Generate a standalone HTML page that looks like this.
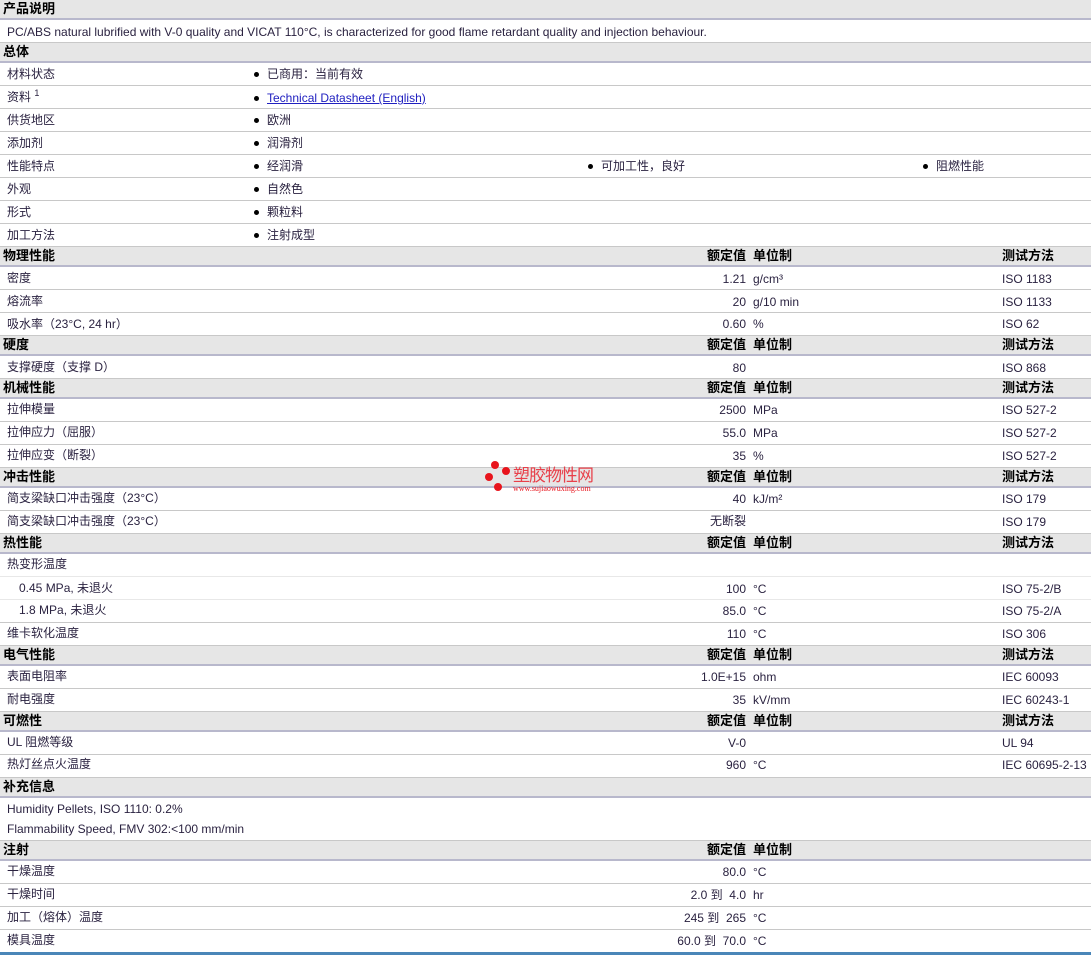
<!DOCTYPE html>
<html><head><meta charset="utf-8"><style>
*{margin:0;padding:0;box-sizing:border-box}
body{width:1091px;height:955px;background:#fff;position:relative;overflow:hidden;font-family:"Liberation Sans","Noto Sans CJK SC",sans-serif;font-size:12px;color:#2a2240}
.r{position:absolute;left:0;width:1091px;border-bottom:1px solid #c8c8c8}
.h{background:#e6e6e6;border-bottom:2px solid #b8b8cc;font-weight:bold;color:#000;font-size:13px}
.t{position:absolute;white-space:nowrap;line-height:14px}
.v{position:absolute;right:345px;white-space:nowrap;line-height:14px;text-align:right}
.u{position:absolute;left:753px;white-space:nowrap;line-height:14px}
.m{position:absolute;left:1002px;white-space:nowrap;line-height:14px}
.b{position:absolute;white-space:nowrap;line-height:14px}
.b:before{content:"";position:absolute;left:-13px;top:5px;width:5px;height:5px;border-radius:50%;background:#000}
a{color:#2020c0;text-decoration:underline}
</style></head><body>
<div class="r h" style="top:0;height:20px"><span class="t" style="left:3px;top:2px">产品说明</span></div>
<div class="r" style="top:20px;height:23px"><span class="t" style="left:7px;top:5px">PC/ABS natural lubrified with V-0 quality and VICAT 110°C, is characterized for good flame retardant quality and injection behaviour.</span></div>
<div class="r h" style="top:43px;height:20px"><span class="t" style="left:3px;top:2px">总体</span></div>
<div class="r" style="top:63px;height:23px"><span class="t" style="left:7px;top:4px">材料状态</span><span class="b" style="left:267px;top:4px">已商用：当前有效</span></div>
<div class="r" style="top:86px;height:23px"><span class="t" style="left:7px;top:4px">资料 <span style="font-size:9px;position:relative;top:-5px">1</span></span><span class="b" style="left:267px;top:5px"><a>Technical Datasheet (English)</a></span></div>
<div class="r" style="top:109px;height:23px"><span class="t" style="left:7px;top:4px">供货地区</span><span class="b" style="left:267px;top:4px">欧洲</span></div>
<div class="r" style="top:132px;height:23px"><span class="t" style="left:7px;top:4px">添加剂</span><span class="b" style="left:267px;top:4px">润滑剂</span></div>
<div class="r" style="top:155px;height:23px"><span class="t" style="left:7px;top:4px">性能特点</span><span class="b" style="left:267px;top:4px">经润滑</span><span class="b" style="left:601px;top:4px">可加工性，良好</span><span class="b" style="left:936px;top:4px">阻燃性能</span></div>
<div class="r" style="top:178px;height:23px"><span class="t" style="left:7px;top:4px">外观</span><span class="b" style="left:267px;top:4px">自然色</span></div>
<div class="r" style="top:201px;height:23px"><span class="t" style="left:7px;top:4px">形式</span><span class="b" style="left:267px;top:4px">颗粒料</span></div>
<div class="r" style="top:224px;height:23px"><span class="t" style="left:7px;top:4px">加工方法</span><span class="b" style="left:267px;top:4px">注射成型</span></div>

<div class="r h" style="top:247px;height:20px"><span class="t" style="left:3px;top:2px">物理性能</span><span class="v" style="top:2px">额定值</span><span class="u" style="top:2px">单位制</span><span class="m" style="top:2px">测试方法</span></div>
<div class="r" style="top:267px;height:23px"><span class="t" style="left:7px;top:4px">密度</span><span class="v" style="top:5px">1.21</span><span class="u" style="top:5px">g/cm³</span><span class="m" style="top:5px">ISO 1183</span></div>
<div class="r" style="top:290px;height:23px"><span class="t" style="left:7px;top:4px">熔流率</span><span class="v" style="top:5px">20</span><span class="u" style="top:5px">g/10 min</span><span class="m" style="top:5px">ISO 1133</span></div>
<div class="r" style="top:313px;height:23px"><span class="t" style="left:7px;top:4px">吸水率（23°C, 24 hr）</span><span class="v" style="top:4px">0.60</span><span class="u" style="top:4px">%</span><span class="m" style="top:4px">ISO 62</span></div>

<div class="r h" style="top:336px;height:20px"><span class="t" style="left:3px;top:2px">硬度</span><span class="v" style="top:2px">额定值</span><span class="u" style="top:2px">单位制</span><span class="m" style="top:2px">测试方法</span></div>
<div class="r" style="top:356px;height:23px"><span class="t" style="left:7px;top:4px">支撑硬度（支撑 D）</span><span class="v" style="top:5px">80</span><span class="m" style="top:5px">ISO 868</span></div>

<div class="r h" style="top:379px;height:20px"><span class="t" style="left:3px;top:2px">机械性能</span><span class="v" style="top:2px">额定值</span><span class="u" style="top:2px">单位制</span><span class="m" style="top:2px">测试方法</span></div>
<div class="r" style="top:399px;height:23px"><span class="t" style="left:7px;top:3px">拉伸模量</span><span class="v" style="top:4px">2500</span><span class="u" style="top:4px">MPa</span><span class="m" style="top:4px">ISO 527-2</span></div>
<div class="r" style="top:422px;height:23px"><span class="t" style="left:7px;top:3px">拉伸应力（屈服）</span><span class="v" style="top:4px">55.0</span><span class="u" style="top:4px">MPa</span><span class="m" style="top:4px">ISO 527-2</span></div>
<div class="r" style="top:445px;height:23px"><span class="t" style="left:7px;top:3px">拉伸应变（断裂）</span><span class="v" style="top:4px">35</span><span class="u" style="top:4px">%</span><span class="m" style="top:4px">ISO 527-2</span></div>

<div class="r h" style="top:468px;height:20px"><span class="t" style="left:3px;top:2px">冲击性能</span><span class="v" style="top:2px">额定值</span><span class="u" style="top:2px">单位制</span><span class="m" style="top:2px">测试方法</span></div>
<div class="r" style="top:488px;height:23px"><span class="t" style="left:7px;top:3px">简支梁缺口冲击强度（23°C）</span><span class="v" style="top:4px">40</span><span class="u" style="top:4px">kJ/m²</span><span class="m" style="top:4px">ISO 179</span></div>
<div class="r" style="top:511px;height:23px"><span class="t" style="left:7px;top:3px">简支梁缺口冲击强度（23°C）</span><span class="v" style="top:3px">无断裂</span><span class="m" style="top:4px">ISO 179</span></div>

<div class="r h" style="top:534px;height:20px"><span class="t" style="left:3px;top:2px">热性能</span><span class="v" style="top:2px">额定值</span><span class="u" style="top:2px">单位制</span><span class="m" style="top:2px">测试方法</span></div>
<div class="r" style="top:554px;height:23px;border-bottom-color:#e8e8e8"><span class="t" style="left:7px;top:3px">热变形温度</span></div>
<div class="r" style="top:577px;height:23px;border-bottom-color:#e8e8e8"><span class="t" style="left:19px;top:4px">0.45 MPa, 未退火</span><span class="v" style="top:5px">100</span><span class="u" style="top:5px">°C</span><span class="m" style="top:5px">ISO 75-2/B</span></div>
<div class="r" style="top:600px;height:23px"><span class="t" style="left:19px;top:3px">1.8 MPa, 未退火</span><span class="v" style="top:4px">85.0</span><span class="u" style="top:4px">°C</span><span class="m" style="top:4px">ISO 75-2/A</span></div>
<div class="r" style="top:623px;height:23px"><span class="t" style="left:7px;top:3px">维卡软化温度</span><span class="v" style="top:4px">110</span><span class="u" style="top:4px">°C</span><span class="m" style="top:4px">ISO 306</span></div>

<div class="r h" style="top:646px;height:20px"><span class="t" style="left:3px;top:2px">电气性能</span><span class="v" style="top:2px">额定值</span><span class="u" style="top:2px">单位制</span><span class="m" style="top:2px">测试方法</span></div>
<div class="r" style="top:666px;height:23px"><span class="t" style="left:7px;top:3px">表面电阻率</span><span class="v" style="top:4px">1.0E+15</span><span class="u" style="top:4px">ohm</span><span class="m" style="top:4px">IEC 60093</span></div>
<div class="r" style="top:689px;height:23px"><span class="t" style="left:7px;top:3px">耐电强度</span><span class="v" style="top:4px">35</span><span class="u" style="top:4px">kV/mm</span><span class="m" style="top:4px">IEC 60243-1</span></div>

<div class="r h" style="top:712px;height:20px"><span class="t" style="left:3px;top:2px">可燃性</span><span class="v" style="top:2px">额定值</span><span class="u" style="top:2px">单位制</span><span class="m" style="top:2px">测试方法</span></div>
<div class="r" style="top:732px;height:23px"><span class="t" style="left:7px;top:3px">UL 阻燃等级</span><span class="v" style="top:4px">V-0</span><span class="m" style="top:4px">UL 94</span></div>
<div class="r" style="top:755px;height:23px"><span class="t" style="left:7px;top:2px">热灯丝点火温度</span><span class="v" style="top:3px">960</span><span class="u" style="top:3px">°C</span><span class="m" style="top:3px">IEC 60695-2-13</span></div>

<div class="r h" style="top:778px;height:20px"><span class="t" style="left:3px;top:2px">补充信息</span></div>
<div class="r" style="top:798px;height:21px;border-bottom:none"><span class="t" style="left:7px;top:4px">Humidity Pellets, ISO 1110: 0.2%</span></div>
<div class="r" style="top:819px;height:22px"><span class="t" style="left:7px;top:3px">Flammability Speed, FMV 302:&lt;100 mm/min</span></div>

<div class="r h" style="top:841px;height:20px"><span class="t" style="left:3px;top:2px">注射</span><span class="v" style="top:2px">额定值</span><span class="u" style="top:2px">单位制</span></div>
<div class="r" style="top:861px;height:23px"><span class="t" style="left:7px;top:3px">干燥温度</span><span class="v" style="top:4px">80.0</span><span class="u" style="top:4px">°C</span></div>
<div class="r" style="top:884px;height:23px"><span class="t" style="left:7px;top:3px">干燥时间</span><span class="v" style="top:4px">2.0 到&nbsp; 4.0</span><span class="u" style="top:4px">hr</span></div>
<div class="r" style="top:907px;height:23px"><span class="t" style="left:7px;top:3px">加工（熔体）温度</span><span class="v" style="top:4px">245 到&nbsp; 265</span><span class="u" style="top:4px">°C</span></div>
<div class="r" style="top:930px;height:22px;border-bottom:none"><span class="t" style="left:7px;top:3px">模具温度</span><span class="v" style="top:4px">60.0 到&nbsp; 70.0</span><span class="u" style="top:4px">°C</span></div>
<div style="position:absolute;left:0;top:952px;width:1091px;height:3px;background:#4a86b8"></div>

<div style="position:absolute;left:483px;top:460px;width:30px;height:34px">
<div style="position:absolute;left:8px;top:1px;width:8px;height:8px;border-radius:50%;background:#e8141c"></div>
<div style="position:absolute;left:19px;top:7px;width:8px;height:8px;border-radius:50%;background:#e8141c"></div>
<div style="position:absolute;left:2px;top:13px;width:8px;height:8px;border-radius:50%;background:#e8141c"></div>
<div style="position:absolute;left:11px;top:23px;width:8px;height:8px;border-radius:50%;background:#e8141c"></div>
</div>
<div style="position:absolute;left:513px;top:465px;font-size:17px;line-height:18px;color:#e8404a;font-family:'Noto Sans CJK SC',sans-serif;letter-spacing:-1px">塑胶物性网</div>
<div style="position:absolute;left:513px;top:484px;font-size:8px;line-height:9px;color:#e8141c;font-family:'Liberation Serif',serif">www.sujiaowuxing.com</div>
</body></html>
